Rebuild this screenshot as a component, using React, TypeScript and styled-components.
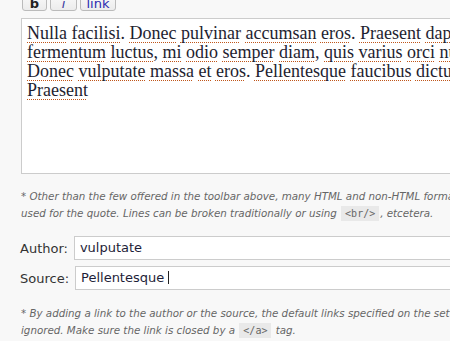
import React from "react";
import styled, { createGlobalStyle } from "styled-components";

const Global = createGlobalStyle`
  html, body { margin: 0; padding: 0; background: #f8f8f8; overflow: hidden; }
  body { font-family: "DejaVu Sans", Verdana, sans-serif; }
`;

const Page = styled.div`
  width: 450px;
  height: 341px;
  overflow: hidden;
  padding-left: 21px;
  box-sizing: border-box;
`;

const Toolbar = styled.div`
  display: flex;
  gap: 3px;
  margin-top: -11px;
  padding-left: 1px;
`;

const ToolButton = styled.button<{ $w: number; $italic?: boolean; $bold?: boolean; $color?: string }>`
  width: ${(p) => p.$w}px;
  height: 22px;
  box-sizing: border-box;
  border: 1px solid #bbb;
  border-radius: 3px;
  background: linear-gradient(#fefefe, #ececec);
  font-family: "DejaVu Sans", Verdana, sans-serif;
  font-size: 13px;
  line-height: 13px;
  padding: 6px 0 0 0;
  color: ${(p) => p.$color || "#222"};
  font-style: ${(p) => (p.$italic ? "italic" : "normal")};
  font-weight: ${(p) => (p.$bold ? "bold" : "normal")};
`;

const Editor = styled.div`
  margin-top: 7px;
  width: 460px;
  height: 156px;
  box-sizing: border-box;
  border: 1px solid #cccccc;
  background: #fff;
  padding: 5px 0 0 5px;
  font-family: "Liberation Serif", "Times New Roman", serif;
  font-size: 18px;
  line-height: 19px;
  color: #1e1e30;
`;

const Line = styled.div`
  white-space: nowrap;
`;

const Word = styled.span`
  text-decoration: underline dotted #c0561a;
  text-underline-offset: 3px;
  text-decoration-thickness: 1px;
`;

const Note = styled.p<{ $top: number }>`
  margin: ${(p) => p.$top}px 0 0 0;
  font-family: "DejaVu Sans", Verdana, sans-serif;
  font-style: italic;
  font-size: 10.3px;
  line-height: 17px;
  color: #666;
  white-space: nowrap;
`;

const Code = styled.code`
  font-family: "DejaVu Sans Mono", "Liberation Mono", monospace;
  font-style: normal;
  font-size: 10px;
  background: #e9e9e9;
  color: #666;
  padding: 2px 4px;
  margin: 0 1px;
`;

const Fields = styled.div`
  margin-top: 14px;
  display: flex;
  flex-direction: column;
  gap: 6px;
`;

const Row = styled.div`
  display: flex;
  align-items: center;
  margin-left: -1px;
`;

const Label = styled.label`
  font-size: 13px;
  color: #333;
  margin-right: 6px;
`;

const Input = styled.div`
  flex: 1;
  height: 24px;
  box-sizing: border-box;
  border: 1px solid #cccccc;
  background: #fff;
  font-size: 13px;
  line-height: 22px;
  padding-left: 5px;
  color: #1e1e38;
  margin-right: -20px;
  white-space: pre;
`;

const Caret = styled.span`
  display: inline-block;
  width: 1px;
  height: 13px;
  background: #222;
  vertical-align: -2px;
`;

const lines = [
  "Nulla facilisi. Donec pulvinar accumsan eros. Praesent dapibus",
  "fermentum luctus, mi odio semper diam, quis varius orci nunc",
  "Donec vulputate massa et eros. Pellentesque faucibus dictum",
  "Praesent",
];

function renderLine(text: string) {
  const parts = text.split(" ");
  return parts.map((w, i) => {
    const m = w.match(/^([A-Za-z]+)(.*)$/);
    const word = m ? m[1] : w;
    const punct = m ? m[2] : "";
    return (
      <React.Fragment key={i}>
        <Word>{word}</Word>
        {punct}
        {i < parts.length - 1 ? " " : ""}
      </React.Fragment>
    );
  });
}

export default function App() {
  return (
    <>
      <Global />
      <Page>
        <Toolbar>
          <ToolButton $w={25} $bold>b</ToolButton>
          <ToolButton $w={27} $italic $color="#3a3aa0">i</ToolButton>
          <ToolButton $w={36} $color="#2b2bb0">link</ToolButton>
        </Toolbar>
        <Editor>
          {lines.map((l, i) => (
            <Line key={i}>{renderLine(l)}</Line>
          ))}
        </Editor>
        <Note $top={14}>
          * Other than the few offered in the toolbar above, many HTML and non-HTML formatting
          <br />
          used for the quote. Lines can be broken traditionally or using <Code>&lt;br/&gt;</Code>, etcetera.
        </Note>
        <Fields>
          <Row>
            <Label>Author:</Label>
            <Input>vulputate</Input>
          </Row>
          <Row>
            <Label>Source:</Label>
            <Input>
              Pellentesque <Caret />
            </Input>
          </Row>
        </Fields>
        <Note $top={15}>
          * By adding a link to the author or the source, the default links specified on the settings
          <br />
          ignored. Make sure the link is closed by a <Code>&lt;/a&gt;</Code> tag.
        </Note>
      </Page>
    </>
  );
}
